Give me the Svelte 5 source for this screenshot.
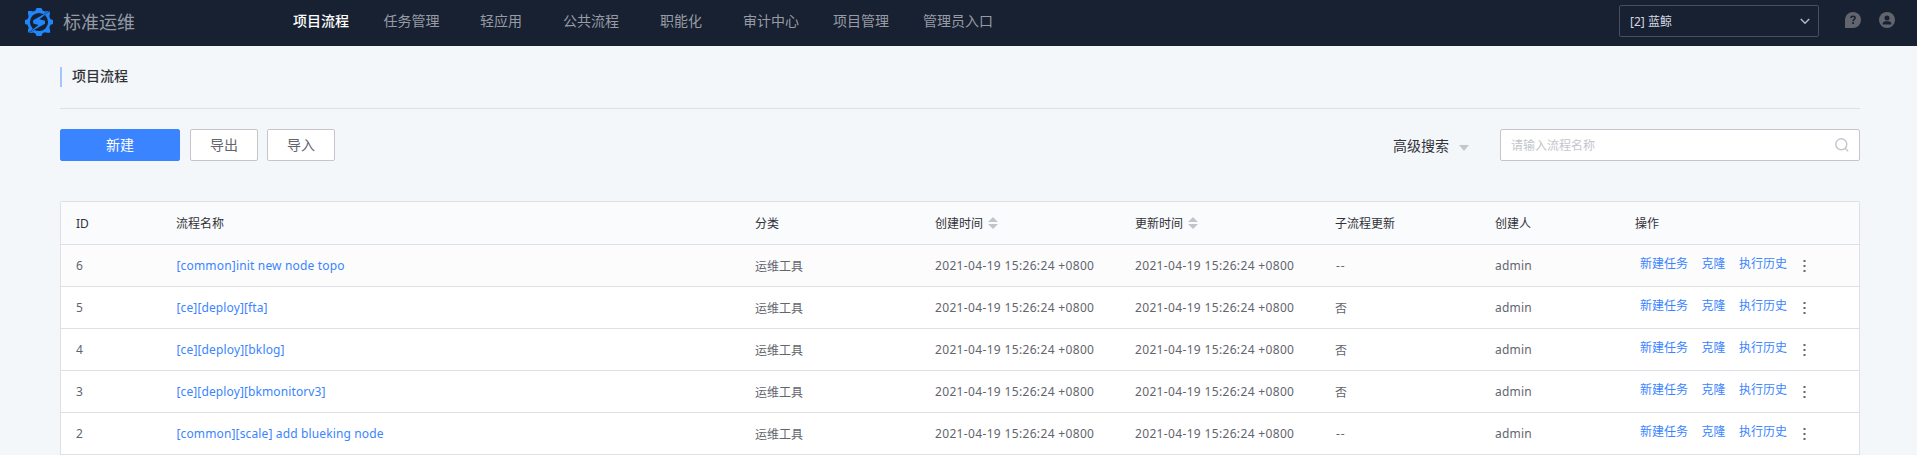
<script>
  const nav = [
    { label: '项目流程', width: 57, gap: 33.5, active: true },
    { label: '任务管理', width: 57, gap: 39.5 },
    { label: '轻应用', width: 43, gap: 40 },
    { label: '公共流程', width: 57, gap: 40 },
    { label: '职能化', width: 43, gap: 40 },
    { label: '审计中心', width: 57, gap: 33 },
    { label: '项目管理', width: 57, gap: 33 },
    { label: '管理员入口', width: 71, gap: 0 }
  ];
  const time = '2021-04-19 15:26:24 +0800';
  const rows = [
    { id: 6, name: '[common]init new node topo', width: 168, sub: '--' },
    { id: 5, name: '[ce][deploy][fta]', width: 91, sub: '否' },
    { id: 4, name: '[ce][deploy][bklog]', width: 108, sub: '否' },
    { id: 3, name: '[ce][deploy][bkmonitorv3]', width: 149, sub: '否' },
    { id: 2, name: '[common][scale] add blueking node', width: 207, sub: '--' }
  ];
  const columns = [
    { label: 'ID' },
    { label: '流程名称' },
    { label: '分类' },
    { label: '创建时间', sortable: true },
    { label: '更新时间', sortable: true },
    { label: '子流程更新' },
    { label: '创建人' },
    { label: '操作' }
  ];
</script>

<header>
  <div class="brand">
    <svg width="28" height="28" viewBox="0 0 28 28">
      <g fill="#2086fc">
        <path fill-rule="evenodd" d="M11.6 0h4.8l1.2 2.5 2.2.9L22.3 3h2.4l.2 3-.6 2.2 1.2 3L28 12v4l-2.5.8-1.2 3 .8 2.3v2.6h-3l-2.3-.4-2.2.9L16.4 28h-4.8l-1.2-2.6-2.2-.9-2.3.5H3v-3l.7-2.2-1.2-3L0 16v-4l2.5-.8 1.2-3L3 6V3h3l2.2.4 2.2-.9zM14 4.9a9.1 9.1 0 1 0 0 18.2a9.1 9.1 0 1 0 0-18.2z" />
      </g>
      <path d="M25.4 2.4 8.2 12.3v3.2l5.4 1.4L3 25.2l17-9.4v-3.1l-5.6-1.5z" fill="#2086fc" stroke="#182131" stroke-width="0.7" paint-order="stroke" />
    </svg>
    <span>标准运维</span>
  </div>
  <nav>
    {#each nav as item}
      <a class:active={item.active} style="width: {item.width}px; margin-right: {item.gap}px">{item.label}</a>
    {/each}
  </nav>
  <div class="project">
    <span>[2] 蓝鲸</span>
    <svg width="10" height="7" viewBox="0 0 10 7"><path d="M.8 1 5 5.3 9.2 1" fill="none" stroke="#b4b8c1" stroke-width="1.5" /></svg>
  </div>
  <svg class="help" width="16" height="16" viewBox="0 0 16 16">
    <path d="M0 16V8a8 8 0 1 1 8 8z" fill="#63656e" />
    <path d="M5.9 6.1c0-2.6 4.4-2.5 4.2-.1C10 7.4 8.1 7.3 8.1 9.2" fill="none" stroke="#182131" stroke-width="1.6" />
    <path d="M7.2 10.3h1.8v1.6H7.2z" fill="#182131" />
  </svg>
  <svg class="user" width="16" height="16" viewBox="0 0 16 16">
    <circle cx="8" cy="8" r="8" fill="#63656e" />
    <circle cx="8" cy="5.9" r="2.5" fill="#182131" />
    <path d="M3.6 12.4c0-2.1 1.2-3.2 3-3.2h2.8c1.8 0 3 1.1 3 3.2z" fill="#182131" />
  </svg>
</header>

<main>
  <div class="title"><h1>项目流程</h1></div>
  <div class="toolbar">
    <button class="primary">新建</button>
    <button>导出</button>
    <button>导入</button>
    <div class="advanced">
      <span>高级搜索</span>
      <i></i>
    </div>
    <div class="search">
      <span>请输入流程名称</span>
      <svg width="14" height="14" viewBox="0 0 14 14" fill="none" stroke="#c4c6cc" stroke-width="1.4"><circle cx="6.3" cy="6.3" r="5.5" /><path d="m10.2 10.2 3 3" /></svg>
    </div>
  </div>

  <section class="table">
    <div class="row head">
      {#each columns as col}
        <div class="cell">
          <span>{col.label}</span>
          {#if col.sortable}
            <svg width="10" height="12" viewBox="0 0 10 12" fill="#c0c4cc"><path d="M0 5 5 0l5 5zM0 7h10l-5 5z" /></svg>
          {/if}
        </div>
      {/each}
    </div>
    {#each rows as row, i}
      <div class="row" class:hover={i === 0}>
        <div class="cell">{row.id}</div>
        <div class="cell">
          <svg class="name" width={row.width + 4} height="20"><text x="0.5" y="14" textLength={row.width} lengthAdjust="spacing">{row.name}</text></svg>
        </div>
        <div class="cell">运维工具</div>
        <div class="cell time">{time}</div>
        <div class="cell time">{time}</div>
        <div class="cell" class:dash={row.sub === '--'}>{row.sub}</div>
        <div class="cell admin">admin</div>
        <div class="cell actions">
          <a>新建任务</a><a>克隆</a><a>执行历史</a>
          <svg width="3" height="12" viewBox="0 0 3 12" fill="#63656e"><path d="M.5 0h2v2h-2zM.5 5h2v2h-2zM.5 10h2v2h-2z" /></svg>
        </div>
      </div>
    {/each}
  </section>
</main>

<style>
  :global(body) {
    background: #f4f7fa;
    overflow: hidden;
    font-family: 'Noto Sans', 'Noto Sans CJK SC', sans-serif;
    font-size: 12px;
    color: #63656e;
  }
  header {
    display: flex;
    height: 46px;
    background: #182131;
    box-sizing: border-box;
    padding-left: 25px;
  }
  .brand {
    display: flex;
    width: 268px;
    white-space: nowrap;
  }
  .brand svg {
    margin-top: 8px;
  }
  .brand span {
    margin-left: 10px;
    font-size: 18px;
    line-height: 45px;
    color: #979ba5;
  }
  nav {
    display: flex;
    flex: 1;
    font-size: 14px;
    line-height: 42px;
    color: #979ba5;
  }
  nav a {
    flex: none;
    white-space: nowrap;
  }
  nav .active {
    color: #fff;
    font-weight: 500;
  }
  .project {
    display: flex;
    align-items: center;
    justify-content: space-between;
    box-sizing: border-box;
    width: 200px;
    height: 32px;
    margin-top: 5px;
    padding: 0 8px 0 10px;
    border: 1px solid #445060;
    border-radius: 2px;
    color: #d3d9e4;
  }
  .help {
    margin: 12px 18px 0 26px;
  }
  .user {
    margin: 12px 22px 0 0;
  }
  main {
    padding: 0 57px 0 60px;
  }
  .title {
    height: 63px;
    padding-top: 21px;
    box-sizing: border-box;
    border-bottom: 1px solid #dde0e5;
  }
  h1 {
    margin: 0;
    height: 20px;
    border-left: 2px solid #a3c5fd;
    padding-left: 10px;
    font-size: 14px;
    font-weight: 500;
    line-height: 18px;
    color: #313238;
  }
  .toolbar {
    display: flex;
    margin-top: 20px;
    height: 32px;
  }
  button {
    box-sizing: border-box;
    width: 68px;
    margin-right: 9px;
    padding: 0;
    border: 1px solid #c4c6cc;
    border-radius: 2px;
    background: #fff;
    font: 14px/30px 'Noto Sans', 'Noto Sans CJK SC', sans-serif;
    color: #63656e;
  }
  .primary {
    width: 120px;
    margin-right: 10px;
    border-color: #3a84ff;
    background: #3a84ff;
    color: #fff;
  }
  .advanced {
    display: flex;
    align-items: center;
    margin-left: auto;
    margin-right: 31px;
    font-size: 14px;
    line-height: 32px;
    color: #313238;
  }
  .advanced span {
    padding-top: 1px;
  }
  .advanced i {
    margin: 6px 0 0 10px;
    border: 5px solid transparent;
    border-top: 6px solid #c4c6cc;
    border-bottom: 0;
  }
  .search {
    display: flex;
    align-items: center;
    justify-content: space-between;
    box-sizing: border-box;
    width: 360px;
    padding: 0 10px;
    border: 1px solid #c4c6cc;
    border-radius: 2px;
    background: #fff;
    color: #c4c6cc;
  }
  .table {
    margin-top: 40px;
    box-sizing: border-box;
    border: 1px solid #dfe0e5;
    border-bottom: 0;
    border-radius: 2px 2px 0 0;
    background: #fff;
  }
  .row {
    display: grid;
    grid-template-columns: 100px 579px 180px 200px 200px 160px 140px 1fr;
    height: 42px;
    box-sizing: border-box;
    border-bottom: 1px solid #dfe0e5;
  }
  .head {
    height: 43px;
    background: #fafbfd;
    color: #313238;
  }
  .hover {
    background: #fcfcfd;
  }
  .cell {
    display: flex;
    align-items: center;
    padding-left: 15px;
    white-space: nowrap;
  }
  .head svg {
    margin-left: 5px;
  }
  .name {
    fill: #3a84ff;
    font-size: 12px;
  }
  .time {
    letter-spacing: 0.34px;
  }
  .dash {
    padding-left: 16px;
    letter-spacing: 1px;
  }
  .admin {
    letter-spacing: 0.2px;
  }
  .actions {
    padding-left: 20px;
  }
  .actions a {
    margin: -5px 13.5px 0 0;
    color: #3a84ff;
  }
  .actions svg {
    margin: 1px 0 0 2px;
  }
</style>
